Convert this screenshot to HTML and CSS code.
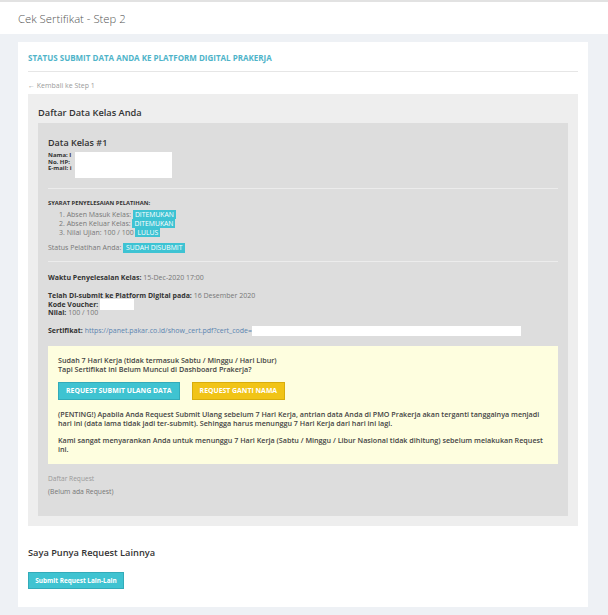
FILE: index.html
```html
<!DOCTYPE html>
<html lang="id">
<head>
  <meta charset="UTF-8">
  <meta name="viewport" content="width=device-width, initial-scale=1.0">
  <title>Cek Sertifikat - Step 2</title>
  <link rel="stylesheet" href="styles.css">
</head>
<body>
  <div class="topbar">Cek Sertifikat - Step 2</div>

  <div class="main">
    <div class="card">
      <div class="card-title">Status Submit Data Anda ke Platform Digital Prakerja</div>
      <a class="back" href="#">&larr; Kembali ke Step 1</a>

      <div class="panel">
        <h2>Daftar Data Kelas Anda</h2>

        <div class="inner">
          <h3>Data Kelas #1</h3>
          <div class="identity">
            <div class="id-labels">
              <div>Nama: I</div>
              <div>No. HP:</div>
              <div>E-mail: i</div>
            </div>
            <div class="redact id-box"></div>
          </div>

          <div class="divider"></div>

          <div class="req-title">SYARAT PENYELESAIAN PELATIHAN:</div>
          <ol class="req-list">
            <li>1. Absen Masuk Kelas: <span class="badge">DITEMUKAN</span></li>
            <li>2. Absen Keluar Kelas: <span class="badge">DITEMUKAN</span></li>
            <li>3. Nilai Ujian: 100 / 100 <span class="badge">LULUS</span></li>
          </ol>
          <div class="status">Status Pelatihan Anda: <span class="badge big">SUDAH DISUBMIT</span></div>

          <div class="divider short"></div>

          <div class="line first"><b>Waktu Penyelesaian Kelas:</b> 15-Dec-2020 17:00</div>

          <div class="group">
            <div class="line"><b>Telah Di-submit ke Platform Digital pada:</b> 16 Desember 2020</div>
            <div class="line"><b>Kode Voucher:</b> <span class="redact voucher-box"></span></div>
            <div class="line"><b>Nilai:</b> 100 / 100</div>
          </div>

          <div class="line cert"><b>Sertifikat:</b> <a href="#">https://panet.pakar.co.id/show_cert.pdf?cert_code=</a><span class="redact cert-box"></span></div>

          <div class="notice">
            <p>Sudah 7 Hari Kerja (tidak termasuk Sabtu / Minggu / Hari Libur)<br>Tapi Sertifikat ini Belum Muncul di Dashboard Prakerja?</p>
            <div class="actions">
              <button class="btn btn-info">REQUEST SUBMIT ULANG DATA</button>
              <button class="btn btn-warning">REQUEST GANTI NAMA</button>
            </div>
            <p>(PENTING!) Apabila Anda Request Submit Ulang sebelum 7 Hari Kerja, antrian data Anda di PMO Prakerja akan terganti tanggalnya menjadi hari ini (data lama tidak jadi ter-submit). Sehingga harus menunggu 7 Hari Kerja dari hari ini lagi.</p>
            <p class="last">Kami sangat menyarankan Anda untuk menunggu 7 Hari Kerja (Sabtu / Minggu / Libur Nasional tidak dihitung) sebelum melakukan Request ini.</p>
          </div>

          <div class="req-label">Daftar Request</div>
          <div class="req-empty">(Belum ada Request)</div>
        </div>
      </div>

      <h2 class="other">Saya Punya Request Lainnya</h2>
      <button class="btn btn-info btn-other">Submit Request Lain-Lain</button>
    </div>
  </div>
</body>
</html>
```

FILE: styles.css
```css
body {
  margin: 0;
  background: #eef1f5;
  font-family: "Open Sans", "Liberation Sans", sans-serif;
  color: #333;
}
.topbar {
  background: #fff;
  border-top: 2px solid #e2e2e2;
  height: 32px;
  padding-left: 18px;
  display: flex;
  align-items: center;
  font-size: 11.3px;
  font-weight: 300;
  color: #555;
}
.main {
  padding: 8px 20px 8px 18px;
}
.card {
  background: #fff;
  padding: 10px 10px 18px;
}
.card-title {
  font-size: 8px;
  font-weight: 700;
  color: #4fb4c9;
  text-transform: uppercase;
  line-height: 12px;
  padding-bottom: 7px;
  border-bottom: 1px solid #e6e6e6;
}
.back {
  display: block;
  font-size: 7px;
  color: #9a9a9a;
  text-decoration: none;
  line-height: 8px;
  margin-top: 10px;
  margin-bottom: 4px;
}
.panel {
  background: #eee;
  padding: 13px 10px 10px;
}
.panel h2 {
  margin: 0 0 4px;
  font-size: 9.25px;
  font-weight: 600;
  line-height: 12px;
  color: #333;
}
.inner {
  background: #ddd;
  padding: 12px 10px 20px;
  font-size: 7px;
  line-height: 8px;
  color: #777;
}
.inner h3 {
  margin: 0;
  font-size: 9px;
  font-weight: 600;
  line-height: 15px;
  color: #333;
}
.identity {
  display: flex;
  margin-top: 2px;
}
.id-labels {
  font-size: 6px;
  font-weight: 700;
  line-height: 6.5px;
  color: #333;
  white-space: nowrap;
}
.redact {
  background: #fff;
  display: inline-block;
}
.id-box {
  width: 97px;
  height: 26px;
  margin-left: 3px;
}
.divider {
  border-top: 1px solid #ececec;
  margin-top: 10px;
}
.req-title {
  margin-top: 10px;
  font-size: 5.8px;
  font-weight: 700;
  line-height: 9px;
  color: #333;
}
.req-list {
  list-style: none;
  margin: 2px 0 0;
  padding-left: 11px;
  line-height: 9px;
}
.badge {
  display: inline-block;
  background: #3ec3d3;
  color: #fff;
  font-size: 6.8px;
  line-height: 9px;
  padding: 0 2px;
  vertical-align: top;
}
.badge.big {
  line-height: 10px;
  padding: 0 3px;
}
.status {
  margin-top: 6px;
  line-height: 10px;
}
.divider.short {
  margin-top: 8px;
}
.line b {
  color: #333;
}
.line.first {
  margin-top: 12px;
}
.group {
  margin-top: 10px;
  line-height: 8.5px;
}
.voucher-box {
  width: 34px;
  height: 11px;
  margin: -2px 0 -1px;
  vertical-align: middle;
}
.cert {
  margin-top: 8px;
  line-height: 10px;
}
.cert a {
  color: #5a84b0;
  text-decoration: none;
}
.cert-box {
  width: 269px;
  height: 10px;
  vertical-align: top;
}
.notice {
  background: #fefedf;
  margin-top: 10px;
  padding: 10px 10px 10px;
  color: #444;
  font-weight: 600;
  font-size: 7.2px;
}
.notice p {
  margin: 0;
  line-height: 9px;
}
.actions {
  display: flex;
  gap: 12px;
  margin: 8px 0 10px;
}
.btn {
  font-family: inherit;
  border: 1px solid transparent;
  border-radius: 0;
  color: #fff;
  font-weight: 700;
  font-size: 6.9px;
  height: 18px;
  padding: 0 7px;
  cursor: pointer;
}
.btn-info {
  background: #3fc3d1;
  border-color: #33abb9;
}
.btn-warning {
  background: #f1c417;
  border-color: #d8ad0c;
}
.notice p.last {
  margin-top: 8px;
}
.req-label {
  margin-top: 10px;
  color: #999;
  font-size: 6.6px;
  line-height: 9px;
}
.req-empty {
  margin-top: 4px;
  font-size: 6.8px;
  line-height: 9px;
}
.other {
  margin: 20px 0 13px;
  font-size: 9.25px;
  font-weight: 600;
  line-height: 13px;
  color: #333;
}
.btn-other {
  display: block;
  width: 96px;
  height: 17px;
  padding: 0;
  font-size: 6.4px;
}
```
